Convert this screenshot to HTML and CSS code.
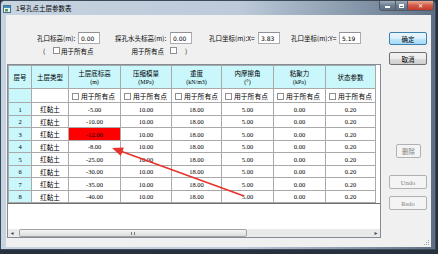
FILE: index.html
```html
<!DOCTYPE html>
<html lang="zh-CN">
<head>
  <meta charset="UTF-8">
  <title>1号孔点土层参数表</title>
  <link rel="stylesheet" href="styles.css">
</head>
<body>

<div class="window">
  <div class="titlebar">
    <svg class="app-icon" width="8" height="8" viewBox="0 0 8 8">
      <rect x="0.5" y="0.5" width="7" height="7" fill="#e9f1f6" stroke="#4f6f86"/>
      <rect x="1" y="1" width="6" height="2" fill="#3d8fc6"/>
      <rect x="2" y="4" width="3" height="2.5" fill="#52a24d"/>
    </svg>
    <span class="title">1号孔点土层参数表</span>
    <div class="win-buttons">
      <span class="wb wb-min"><i></i></span>
      <span class="wb wb-max"><i></i></span>
      <span class="wb wb-close">✕</span>
    </div>
  </div>

  <div class="client">
    <div class="main">
      <div class="form">
        <div class="form-row">
          <div class="field f1"><label class="l1">孔口标高(m):</label><input type="text" value="0.00"></div>
          <div class="field f2"><label class="l2">探孔水头标高(m):</label><input type="text" value="0.00"></div>
          <div class="field f3"><label class="l3">孔口坐标(m):X=</label><input type="text" value="3.83"></div>
          <div class="field f4"><label class="l4">孔口坐标(m):Y=</label><input type="text" value="5.19"></div>
        </div>
        <div class="form-row row2">
          <span class="paren">(</span>
          <span class="check"></span>
          <span>用于所有点</span>
          <span class="all-right">用于所有点</span>
          <span class="check"></span>
          <span class="paren-close">)</span>
        </div>
      </div>

      <div class="grid-box">
        <table class="grid">
          <colgroup>
            <col style="width:23px"><col style="width:37px"><col style="width:52px"><col style="width:51px">
            <col style="width:50px"><col style="width:52px"><col style="width:52px"><col style="width:50px">
          </colgroup>
          <thead>
            <tr class="head">
              <th>层号</th>
              <th>土层类型</th>
              <th>土层底标高<br><span class="unit">(m)</span></th>
              <th>压缩模量<br><span class="unit">(MPa)</span></th>
              <th>重度<br><span class="unit">(kN/m3)</span></th>
              <th>内摩擦角<br><span class="unit">(°)</span></th>
              <th>粘聚力<br><span class="unit">(kPa)</span></th>
              <th>状态参数</th>
            </tr>
            <tr class="apply">
              <td class="num-col"></td>
              <td></td>
              <td><span class="check"></span>用于所有点</td>
              <td><span class="check"></span>用于所有点</td>
              <td><span class="check"></span>用于所有点</td>
              <td><span class="check"></span>用于所有点</td>
              <td><span class="check"></span>用于所有点</td>
              <td><span class="check"></span>用于所有点</td>
            </tr>
          </thead>
          <tbody id="rows"></tbody>
        </table>
        <div class="grid-empty"></div>
        <div class="hscroll">
          <span class="sb-arrow left">◂</span>
          <div class="sb-track">
            <div class="sb-thumb"><span class="grip"></span></div>
          </div>
          <span class="sb-arrow right">▸</span>
        </div>
      </div>
    </div>

    <div class="side">
      <button class="btn btn-default">确定</button>
      <button class="btn btn-cancel">取消</button>
      <button class="btn btn-delete" disabled>删除</button>
      <button class="btn btn-undo" disabled>Undo</button>
      <button class="btn btn-redo" disabled>Redo</button>
    </div>

    <svg class="resize-grip" width="6" height="6" viewBox="0 0 6 6">
      <rect x="4" y="0" width="1" height="1" fill="#9aa3ad"/>
      <rect x="2" y="2" width="1" height="1" fill="#9aa3ad"/>
      <rect x="4" y="2" width="1" height="1" fill="#9aa3ad"/>
      <rect x="0" y="4" width="1" height="1" fill="#9aa3ad"/>
      <rect x="2" y="4" width="1" height="1" fill="#9aa3ad"/>
      <rect x="4" y="4" width="1" height="1" fill="#9aa3ad"/>
    </svg>
  </div>

  <!-- 标注箭头 -->
  <svg class="arrow" width="438" height="254" viewBox="0 0 438 254">
    <line x1="244" y1="196" x2="119" y2="150.5" stroke="#e8332c" stroke-width="1.6"/>
    <polygon points="112,148 123.9,147.5 120.8,156" fill="#e8332c"/>
  </svg>
</div>

<script>
  const bottoms = ["-5.00", "-10.00", "-12.00", "-8.00", "-25.00", "-30.00", "-35.00", "-40.00"];
  const tbody = document.getElementById("rows");

  bottoms.forEach((b, i) => {
    const tr = document.createElement("tr");
    tr.className = i % 2 === 0 ? "r13" : "r12";
    const red = i === 2 ? ' class="marked"' : "";
    tr.innerHTML =
      `<td class="num-col">${i + 1}</td>` +
      `<td class="cn">红黏土</td>` +
      `<td${red}>${b}</td>` +
      `<td>10.00</td><td>18.00</td><td>5.00</td><td>0.00</td><td>0.20</td>`;
    tbody.appendChild(tr);
  });
</script>

</body>
</html>
```

FILE: styles.css
```css
* {
  box-sizing: border-box;
}
body {
  margin: 0;
  width: 438px;
  height: 254px;
  overflow: hidden;
  background: #27313d;
  font-family: "Noto Sans CJK SC", sans-serif;
  font-size: 6.5px;
  color: #000;
}
.window {
  position: relative;
  width: 436px;
  height: 250px;
  background: linear-gradient(90deg, #c6d3e1 0%, #bccad9 55%, #8a9bae 80%, #5f7085 100%);
  border: 1px solid #3d4957;
  border-radius: 4px 4px 0 0;
}
.titlebar {
  height: 14px;
  display: flex;
  align-items: center;
}
.app-icon {
  margin-left: 2px;
  margin-top: 1px;
}
.title {
  margin-left: 5px;
  font-size: 6.5px;
  line-height: 1;
  margin-top: 1px;
}
.win-buttons {
  margin-left: auto;
  margin-right: 1px;
  align-self: flex-start;
  display: flex;
  height: 10px;
  border: 1px solid #4e5a68;
  border-top: none;
  border-radius: 0 0 3px 3px;
  overflow: hidden;
}
.wb {
  height: 9px;
  display: flex;
  align-items: center;
  justify-content: center;
  background: linear-gradient(#9eabb9, #6f7f92 50%, #5d6d80);
  border-right: 1px solid #4e5a68;
}
.wb-min {
  width: 16px;
}
.wb-min i {
  display: block;
  width: 5px;
  height: 2px;
  margin-top: 3px;
  background: #fff;
}
.wb-max {
  width: 12px;
}
.wb-max i {
  display: block;
  width: 5px;
  height: 4px;
  border: 1px solid #fff;
  border-top-width: 2px;
}
.wb-close {
  width: 25px;
  border-right: none;
  background: linear-gradient(#e8a896, #d35a45 50%, #c0392b);
  color: #fff;
  font-size: 6px;
  font-weight: bold;
  font-family: "DejaVu Sans", sans-serif;
}

.client {
  position: relative;
  margin-left: 5px;
  width: 425px;
  height: 232px;
  background: #f0f0f0;
  display: flex;
}
.main {
  width: 375px;
}
.form {
  padding-top: 17px;
}
.form-row {
  display: flex;
  align-items: center;
  height: 12px;
  padding-left: 31px;
}
.field {
  display: flex;
  align-items: center;
}
.f1 { width: 78px; }
.f2 { width: 94px; }
.f3 { width: 82px; }
.f4 { width: 70px; }
.field label {
  white-space: nowrap;
}
.l1 { width: 41px; }
.l2 { width: 55px; }
.l3 { width: 49px; }
.l4 { width: 48px; }
.field input {
  width: 22px;
  height: 12px;
  padding: 0 2px;
  border: 1px solid #abadb3;
  border-top-color: #8e9094;
  background: #fff;
  font-family: "DejaVu Sans", sans-serif;
  font-size: 6px;
  color: #000;
  outline: none;
}
.row2 {
  height: 11px;
  margin-top: 1px;
  padding-left: 37px;
}
.paren {
  width: 10px;
}
.check {
  display: inline-block;
  width: 7px;
  height: 7px;
  border: 1px solid #8f8f8f;
  background: #fff;
  margin-right: 1px;
  vertical-align: middle;
}
.all-right {
  margin-left: 38px;
  margin-right: 6px;
}
.paren-close {
  margin-left: 7px;
}

.grid-box {
  margin-top: 8px;
  margin-left: 1px;
  width: 374px;
  height: 174px;
  border: 1px solid #828b96;
  background: #fff;
  display: flex;
  flex-direction: column;
}
.grid {
  border-collapse: collapse;
  table-layout: fixed;
  width: 367px;
}
.grid th,
.grid td {
  border: 1px solid #a9a9a9;
  padding: 0;
  text-align: center;
  font-weight: normal;
  white-space: nowrap;
  overflow: hidden;
}
.grid th {
  background: #c9f7fc;
  height: 23px;
  line-height: 8px;
  font-size: 6.5px;
}
.grid .unit {
  font-family: "Liberation Serif", serif;
  font-size: 6px;
}
.apply td {
  height: 14px;
  text-align: left;
  padding-left: 3px;
  font-size: 6.8px;
}
.apply .check {
  margin-right: 2px;
  margin-top: -1px;
}
.num-col {
  background: #c9f7fc;
}
tbody td {
  font-family: "Liberation Serif", serif;
  font-size: 6.5px;
}
tbody td.cn {
  font-family: "Noto Sans CJK SC", sans-serif;
}
.r13 td {
  height: 13px;
}
.r12 td {
  height: 12px;
}
.grid td.marked {
  background: #ff0000;
}
.grid-empty {
  flex: 1;
  border-top: 1px solid #6f6f6f;
}
.hscroll {
  height: 8px;
  display: flex;
  background: #e9e9e9;
}
.sb-arrow {
  width: 8px;
  font-size: 6px;
  line-height: 8px;
  text-align: center;
  color: #505050;
  font-family: "DejaVu Sans", sans-serif;
}
.sb-track {
  flex: 1;
  padding: 0 1px;
}
.sb-thumb {
  width: 228px;
  margin-left: 2px;
  height: 8px;
  border: 1px solid #a2a2a2;
  border-radius: 2px;
  background: linear-gradient(#f4f4f4, #dcdcdc);
  display: flex;
  align-items: center;
  justify-content: center;
}
.grip {
  width: 4px;
  height: 3px;
  border-left: 1px solid #777;
  border-right: 1px solid #777;
  position: relative;
}

.side {
  width: 50px;
  display: flex;
  flex-direction: column;
  align-items: flex-start;
  padding-top: 17px;
}
.btn {
  margin: 0;
  padding: 0;
  margin-left: 8px;
  width: 38px;
  height: 13px;
  border: 1px solid #707070;
  border-radius: 2px;
  background: linear-gradient(#f2f2f2 0%, #ebebeb 50%, #dddddd 51%, #cfcfcf 100%);
  font-family: "Noto Sans CJK SC", sans-serif;
  font-size: 6.5px;
  color: #000;
}
.btn-default {
  border-color: #3c7fb1;
  background: linear-gradient(#eaf6fd 0%, #d9f0fc 50%, #bee6fd 51%, #a7d9f5 100%);
}
.btn-cancel {
  margin-top: 7px;
}
.btn:disabled {
  border-color: #adb2b5;
  background: #f4f4f4;
  color: #838383;
  height: 14px;
}
.btn-delete {
  margin-top: 79px;
  margin-left: 15px;
  width: 25px;
}
.btn-undo {
  margin-top: 17px;
}
.btn-redo {
  margin-top: 7px;
}
.btn-undo,
.btn-redo {
  font-family: "Liberation Serif", serif;
}
.resize-grip {
  position: absolute;
  right: 1px;
  bottom: 1px;
}
.arrow {
  position: absolute;
  left: -1px;
  top: -1px;
  pointer-events: none;
}
```
